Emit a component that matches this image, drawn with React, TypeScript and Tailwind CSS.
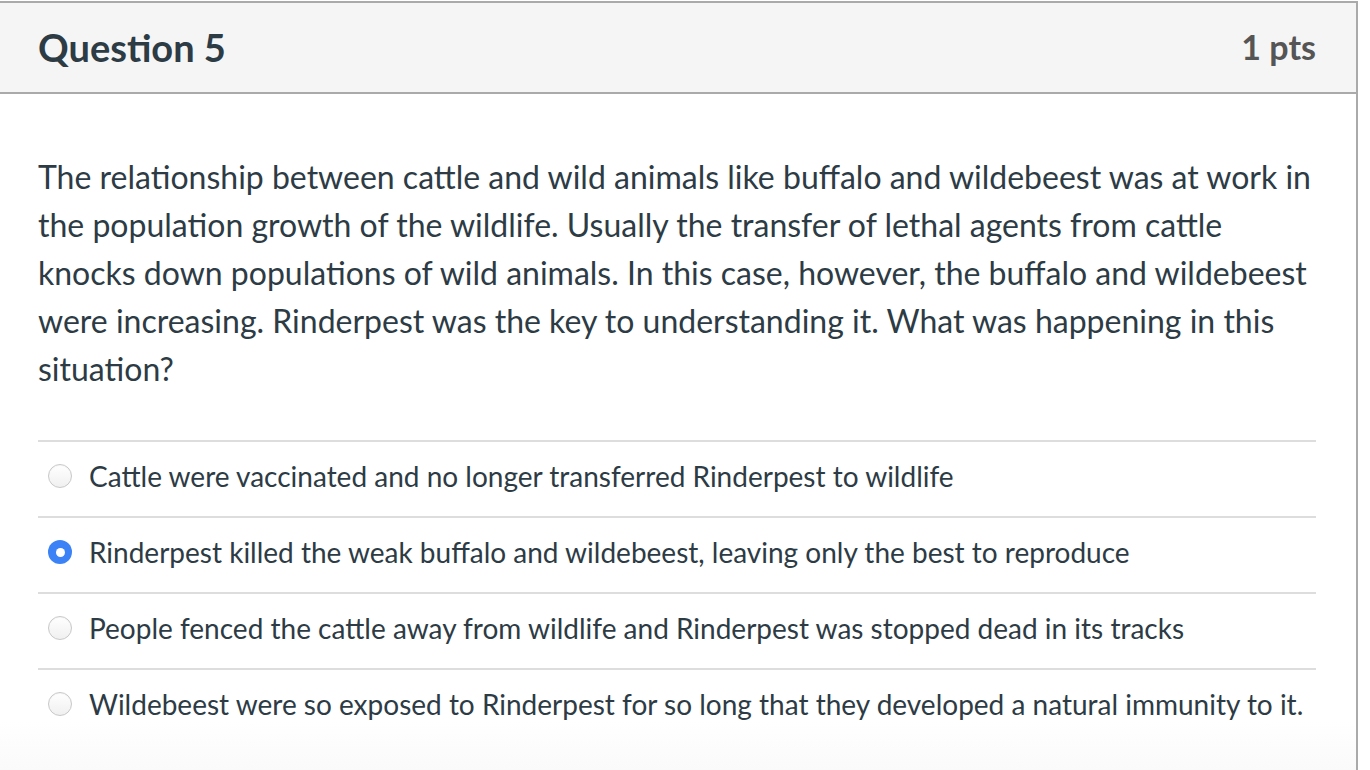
import React from "react";

const answers = [
  { text: "Cattle were vaccinated and no longer transferred Rinderpest to wildlife", selected: false },
  { text: "Rinderpest killed the weak buffalo and wildebeest, leaving only the best to reproduce", selected: true },
  { text: "People fenced the cattle away from wildlife and Rinderpest was stopped dead in its tracks", selected: false },
  { text: "Wildebeest were so exposed to Rinderpest for so long that they developed a natural immunity to it.", selected: false },
];

function Radio({ selected }: { selected: boolean }) {
  if (selected) {
    return (
      <span className="flex h-[24px] w-[24px] shrink-0 items-center justify-center rounded-full bg-[#3b82f6]">
        <span className="h-[9px] w-[9px] rounded-full bg-white" />
      </span>
    );
  }
  return (
    <span className="h-[24px] w-[24px] shrink-0 rounded-full border border-[#c8c8c8] bg-gradient-to-b from-[#ffffff] to-[#f0f0f0] shadow-[inset_0_1px_1px_rgba(0,0,0,0.04)]" />
  );
}

export default function App() {
  return (
    <div className="h-[770px] w-[1370px] overflow-hidden bg-white" style={{ fontFamily: "Lato, 'Open Sans', sans-serif" }}>
      <div className="mt-[1px] ml-[-2px] w-[1360px] border-2 border-[#aaaaaa] border-b-0 h-[800px] bg-gradient-to-b from-white from-[90%] to-[#f7f7f7]">
        <div className="flex h-[91px] items-center justify-between border-b-2 border-[#aaaaaa] bg-[#f5f5f5] pl-[38px] pr-[40px] pb-[1px]">
          <h2 className="text-[38px] font-bold text-[#2d3b45] leading-none">Question 5</h2>
          <span className="text-[34px] font-bold text-[#555555] leading-none">1 pts</span>
        </div>
        <div className="pl-[38px] pr-[40px] pt-[59px]">
          <p className="text-[32px] leading-[48px] text-[#2d3b45]">
            The relationship between cattle and wild animals like buffalo and wildebeest was at work in the population growth of the wildlife. Usually the transfer of lethal agents from cattle knocks down populations of wild animals. In this case, however, the buffalo and wildebeest were increasing. Rinderpest was the key to understanding it. What was happening in this situation?
          </p>
          <div className="mt-[47px]">
            {answers.map((a, i) => (
              <div key={i} className="flex h-[76px] items-center border-t-2 border-[#dddddd] pl-[10px] pb-[6px]">
                <Radio selected={a.selected} />
                <span className="ml-[17px] text-[28px] text-[#2d3b45]">{a.text}</span>
              </div>
            ))}
          </div>
        </div>
      </div>
    </div>
  );
}
